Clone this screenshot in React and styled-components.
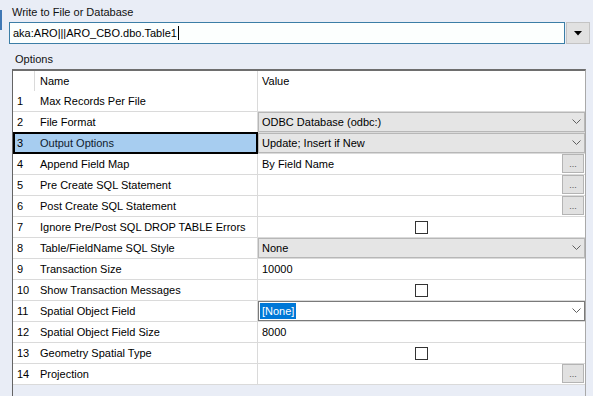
import React from 'react';
import styled, { createGlobalStyle } from 'styled-components';

const GlobalStyle = createGlobalStyle`
  html, body {
    margin: 0;
    padding: 0;
  }
  body {
    background: #e9edf6;
    font-family: "Liberation Sans", Arial, sans-serif;
    font-size: 11px;
    color: #000;
  }
`;

const Panel = styled.div`
  position: relative;
  height: 396px;
  box-sizing: border-box;
  padding-top: 5px;
  display: flex;
  flex-direction: column;
  overflow: hidden;

  &::before {
    content: '';
    position: absolute;
    left: 0;
    top: 10px;
    width: 2px;
    height: 20px;
    background: #3f78b5;
  }
`;

const Label = styled.div`
  line-height: 14px;
  padding-left: ${(p) => p.$indent}px;
  margin-top: ${(p) => p.$top || 0}px;
  color: #111;
`;

const InputRow = styled.div`
  display: flex;
  gap: 1px;
  margin: 3px 0 0 9px;
`;

const TextBox = styled.div`
  width: 556px;
  height: 22px;
  box-sizing: border-box;
  border: 1px solid #3b7ea6;
  background: #fcfffe;
  padding-left: 3px;
  display: flex;
  align-items: center;
  white-space: nowrap;
`;

const Caret = styled.span`
  display: inline-block;
  width: 1px;
  height: 14px;
  margin-left: 1px;
  background: #000;
`;

const DropButton = styled.div`
  width: 24px;
  height: 22px;
  box-sizing: border-box;
  border: 1px solid #c4c4c4;
  background: #e1e1e1;
  display: flex;
  align-items: center;
  justify-content: center;
`;

const Grid = styled.div`
  margin: 3px 0 0 12px;
  width: 574px;
  flex: 1;
  box-sizing: border-box;
  border-top: 2px solid #6e6e6e;
  border-left: 1px solid #646464;
  border-right: 1px solid #a9a9a9;
`;

const Row = styled.div`
  position: relative;
  display: grid;
  grid-template-columns: 22px 223px 1fr;
  height: ${(p) => (p.$header ? 20 : 21)}px;
  box-sizing: border-box;
  border-bottom: ${(p) => (p.$header ? 'none' : '1px solid #dadada')};
  background: #fff;

  ${(p) =>
    p.$selected &&
    `
    &::after {
      content: '';
      position: absolute;
      left: 0;
      top: -1px;
      bottom: -1px;
      width: 245px;
      box-sizing: border-box;
      border: 2px solid #000;
      pointer-events: none;
    }
  `}
`;

const NumCell = styled.div`
  padding-left: 4px;
  line-height: 20px;
  background: ${(p) => (p.$selected ? '#a7cdf0' : '#fff')};
  border-right: ${(p) => (p.$header ? '1px solid #dadada' : 'none')};
`;

const NameCell = styled.div`
  padding-left: 5px;
  line-height: 20px;
  white-space: nowrap;
  overflow: hidden;
  border-right: 1px solid #dadada;
  background: ${(p) => (p.$selected ? '#a7cdf0' : '#fff')};
  color: ${(p) => (p.$selected ? '#10202e' : '#000')};
`;

const ValueCell = styled.div`
  display: flex;
  align-items: center;
  justify-content: ${(p) => (p.$center ? 'center' : 'flex-start')};
  min-width: 0;
`;

const ValueText = styled.span`
  flex: 1;
  padding-left: 4px;
  line-height: 20px;
  white-space: nowrap;
`;

const Combo = styled.div`
  flex: 1;
  height: 20px;
  box-sizing: border-box;
  border: 1px solid ${(p) => (p.$active ? '#7a7a7a' : '#b7b7b7')};
  background: ${(p) => (p.$active ? '#fff' : '#e5e5e5')};
  display: flex;
  align-items: center;
  justify-content: space-between;
  padding: 0 3px 0 3px;
  white-space: nowrap;
`;

const Highlight = styled.span`
  margin-left: -2px;
  padding: 0 2px;
  line-height: 16px;
  background: #0078d7;
  color: #fff;
`;

const EllipsisButton = styled.div`
  margin-left: auto;
  margin-right: 1px;
  align-self: flex-start;
  width: 22px;
  height: 19px;
  box-sizing: border-box;
  border: 1px solid #b4b4b4;
  background: #e1e1e1;
  color: #555;
  font-size: 9px;
  line-height: 1;
  display: flex;
  align-items: flex-end;
  justify-content: center;
  padding-bottom: 3px;
`;

const Checkbox = styled.div`
  width: 13px;
  height: 13px;
  box-sizing: border-box;
  border: 1px solid #333;
  background: #fff;
`;

const Chevron = () => (
  <svg width="9" height="6" viewBox="0 0 9 6">
    <polyline points="0.5,0.5 4.5,4.5 8.5,0.5" fill="none" stroke="#606060" strokeWidth="1" />
  </svg>
);

const DownArrow = () => (
  <svg width="8" height="5" viewBox="0 0 8 5">
    <polygon points="0,0 8,0 4,4.5" fill="#000" />
  </svg>
);

const rows = [
  { name: 'Max Records Per File', kind: 'text', value: '' },
  { name: 'File Format', kind: 'combo', value: 'ODBC Database (odbc:)' },
  { name: 'Output Options', kind: 'combo', value: 'Update; Insert if New', selected: true },
  { name: 'Append Field Map', kind: 'button', value: 'By Field Name' },
  { name: 'Pre Create SQL Statement', kind: 'button', value: '' },
  { name: 'Post Create SQL Statement', kind: 'button', value: '' },
  { name: 'Ignore Pre/Post SQL DROP TABLE Errors', kind: 'check' },
  { name: 'Table/FieldName SQL Style', kind: 'combo', value: 'None' },
  { name: 'Transaction Size', kind: 'text', value: '10000' },
  { name: 'Show Transaction Messages', kind: 'check' },
  { name: 'Spatial Object Field', kind: 'edit', value: '[None]' },
  { name: 'Spatial Object Field Size', kind: 'text', value: '8000' },
  { name: 'Geometry Spatial Type', kind: 'check' },
  { name: 'Projection', kind: 'button', value: '' },
];

const renderValue = (row) => {
  switch (row.kind) {
    case 'combo':
      return (
        <Combo>
          <span>{row.value}</span>
          <Chevron />
        </Combo>
      );
    case 'edit':
      return (
        <Combo $active>
          <Highlight>{row.value}</Highlight>
          <Chevron />
        </Combo>
      );
    case 'button':
      return (
        <>
          <ValueText>{row.value}</ValueText>
          <EllipsisButton>...</EllipsisButton>
        </>
      );
    case 'check':
      return <Checkbox />;
    default:
      return <ValueText>{row.value}</ValueText>;
  }
};

const App = () => (
  <>
    <GlobalStyle />
    <Panel>
      <Label $indent={12}>Write to File or Database</Label>
      <InputRow>
        <TextBox>
          aka:ARO|||ARO_CBO.dbo.Table1
          <Caret />
        </TextBox>
        <DropButton>
          <DownArrow />
        </DropButton>
      </InputRow>
      <Label $indent={15} $top={8}>Options</Label>
      <Grid>
        <Row $header>
          <NumCell $header />
          <NameCell>Name</NameCell>
          <ValueCell>
            <ValueText>Value</ValueText>
          </ValueCell>
        </Row>
        {rows.map((row, i) => (
          <Row key={row.name} $selected={row.selected}>
            <NumCell $selected={row.selected}>{i + 1}</NumCell>
            <NameCell $selected={row.selected}>{row.name}</NameCell>
            <ValueCell $center={row.kind === 'check'}>{renderValue(row)}</ValueCell>
          </Row>
        ))}
      </Grid>
    </Panel>
  </>
);

export default App;
